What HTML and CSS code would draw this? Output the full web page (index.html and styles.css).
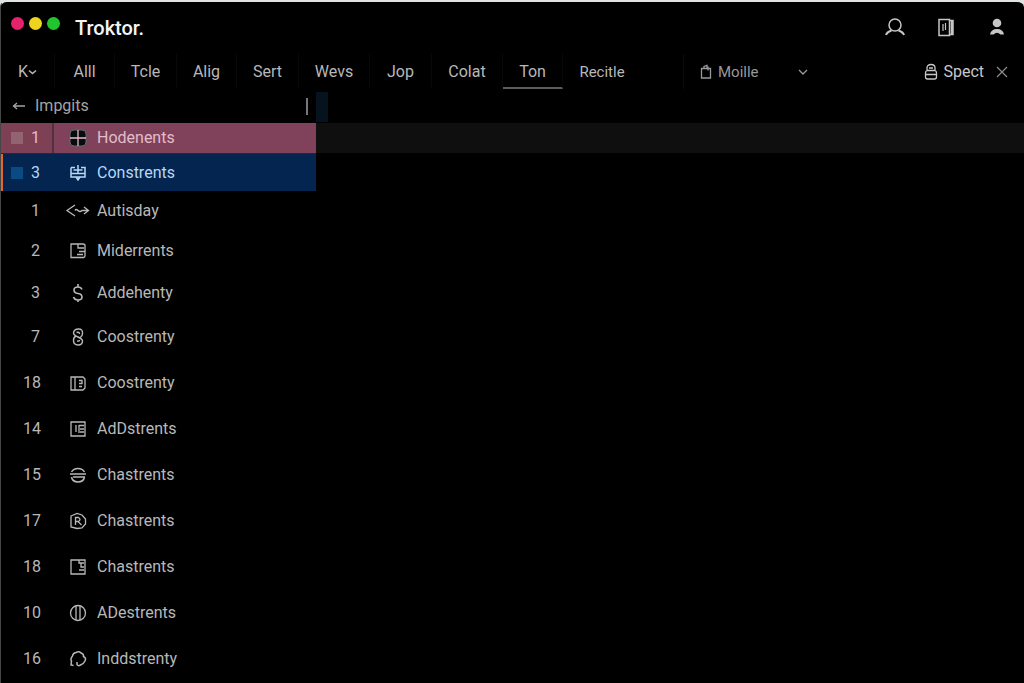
FILE: index.html
```html
<!DOCTYPE html>
<html lang="en">
<head>
<meta charset="utf-8">
<meta name="viewport" content="width=device-width, initial-scale=1">
<title>Troktor</title>
<link rel="stylesheet" href="styles.css">
</head>
<body>
<div class="window">
  <header class="titlebar">
    <div class="lights">
      <button class="light light-close" aria-label="Close"></button>
      <button class="light light-min" aria-label="Minimize"></button>
      <button class="light light-max" aria-label="Maximize"></button>
    </div>
    <h1 class="brand">Troktor.</h1>
    <div class="actions">
      <button class="icon-btn" aria-label="Search"><svg width="22" height="22" viewBox="0 0 22 22"><circle cx="11" cy="8" r="6"/><path d="M2 18Q3 15 7.500 13.500M20 18Q19 15 14.500 13.500" stroke-width="2"/></svg></button>
      <button class="icon-btn" aria-label="Panels"><svg width="22" height="22" viewBox="0 0 22 22"><path d="M4 2.500h10.500v16H4zM14.500 3.500h3.500v14h-3.500M16.500 4v13"/><path d="M8 7v7M10.500 6v7" stroke-width="1.200"/></svg></button>
      <button class="icon-btn" aria-label="Account"><svg width="22" height="22" viewBox="0 0 22 22"><circle cx="11" cy="6" r="4.300" class="fill"/><path d="M4 17.500Q5 12 11 12T18 17.500H14.500Q11 14 7.500 17.500Z" class="fill"/></svg></button>
    </div>
  </header>

  <nav class="toolbar">
    <button class="tab" aria-label="K menu">K<svg width="9" height="8" viewBox="0 0 9 8"><path d="M1 2.500l3.500 3L8 2.500" stroke-width="1.600"/></svg></button>
    <button class="tab">Alll</button>
    <button class="tab tab-m">Tcle</button>
    <button class="tab">Alig</button>
    <button class="tab tab-m">Sert</button>
    <button class="tab tab-l">Wevs</button>
    <button class="tab tab-m">Jop</button>
    <button class="tab tab-l">Colat</button>
    <button class="tab active">Ton</button>
    <button class="tab tab-xl">Recitle</button>
    <button class="mode"><svg width="12" height="16" viewBox="0 0 12 16"><path d="M1.500 4.500h9V14h-9zM4 4.500V2.500l3-1v3M8 2.500v4"/></svg><span>Moille</span><svg class="chev" width="12" height="8" viewBox="0 0 12 8"><path d="M2 2l4 4 4-4"/></svg></button>
    <div class="inspect">
      <button class="spect"><svg width="14" height="18" viewBox="0 0 14 18"><path d="M3 7V5q0-3.500 4-3.500T11 5v2M3 7.500Q1.500 8 1.500 10v4q0 2 2 2h7q2 0 2-2v-4q0-2-1.500-2.500zM5 5h4M2 11.500h10"/></svg><span>Spect</span></button>
      <button class="close" aria-label="Close panel"><svg width="12" height="14" viewBox="0 0 12 14"><path d="M1 2l10 10M11 2L1 12"/></svg></button>
    </div>
  </nav>

  <div class="body">
    <aside class="sidebar">
      <div class="side-head">
        <button class="back"><svg width="14" height="10" viewBox="0 0 14 10"><path d="M1 5h12M5 2L1.500 5 5 8"/></svg><span>Impgits</span></button>
        <span class="caret"></span>
      </div>
      <ul class="list">
        <li class="row row-rose"><span class="mark"></span><span class="num">1</span><span class="ico"><svg width="18" height="18" viewBox="0 0 18 18"><rect x="1" y="1" width="16" height="16" rx="4" fill="#090b0c" stroke="#547070" stroke-width="1"/><path d="M9 1v16M1 9h16"/></svg></span><span>Hodenents</span></li>
        <li class="row row-blue"><span class="mark"></span><span class="num">3</span><span class="ico"><svg width="18" height="18" viewBox="0 0 18 18"><path d="M2 3.500V13h4M2 3.500h4M12 3.500h4V13h-4M4.500 6h9M2 9.500h14M9 1v8.500M6 13h6M7 13l2 3 2-3" stroke-width="1.500"/></svg></span><span>Constrents</span></li>
        <li class="row row-s"><span class="mark"></span><span class="num">1</span><span class="ico"><svg width="24" height="14" viewBox="0 0 24 14"><path d="M9 1L1 6.500l8 5.500M9 6.500q1-2 3 0t4 0h6M18 3l4.500 3.500L18 10"/></svg></span><span>Autisday</span></li>
        <li class="row row-m"><span class="mark"></span><span class="num">2</span><span class="ico"><svg width="18" height="18" viewBox="0 0 18 18"><path d="M9 2H2v13.500h12.500q1.500 0 1.500-2v-10Q16 2 14 2H9v4h6M10 9.500h6M8 12.500h6"/></svg></span><span>Miderrents</span></li>
        <li class="row row-m"><span class="mark"></span><span class="num">3</span><span class="ico"><svg width="18" height="20" viewBox="0 0 18 20"><path d="M9 1v3M13 6.500Q12 4 9 4 5 4 5 7t4 3.500q4 .5 4 3.500t-4 3q-3.500 0-4.500-3M9 17v2" stroke-width="1.600"/></svg></span><span>Addehenty</span></li>
        <li class="row row-l"><span class="mark"></span><span class="num">7</span><span class="ico"><svg width="18" height="20" viewBox="0 0 18 20"><path d="M13.500 6.500Q14 2 9.500 2T4.500 6q0 2 4.500 4t4.500 4q0 4-4.500 4t-4.500-4.500Q4.500 10 7 9M13.500 6.500q0 2.500-2 3.500M7.500 5.500q3-1 3 1.500M8 14q2.500 .5 2.500-1" stroke-width="1.400"/></svg></span><span>Coostrenty</span></li>
        <li class="row row-xl"><span class="mark"></span><span class="num">18</span><span class="ico"><svg width="18" height="18" viewBox="0 0 18 18"><path d="M8 3H2v13h12l2-2V5l-2-2H6v13M10 6.500h3v3h-3M10 12.500h3"/></svg></span><span>Coostrenty</span></li>
        <li class="row row-xl"><span class="mark"></span><span class="num">14</span><span class="ico"><svg width="18" height="18" viewBox="0 0 18 18"><path d="M2 2h14v14H2zM7 5v7M10 5v8M10 5.500h5M11 9h4M11 12h4"/></svg></span><span>AdDstrents</span></li>
        <li class="row row-xl"><span class="mark"></span><span class="num">15</span><span class="ico"><svg width="18" height="18" viewBox="0 0 18 18"><path d="M2.500 6Q4.500 2.500 9 2.500T15.500 6M1 8h16M4 11h12M2.500 11q1 5 6.500 5t6.500-5" stroke-width="1.500"/></svg></span><span>Chastrents</span></li>
        <li class="row row-xl"><span class="mark"></span><span class="num">17</span><span class="ico"><svg width="18" height="18" viewBox="0 0 18 18"><path d="M2 4l6-2.500L13 3l3.500 4v5L13 16l-5 .5L2 15zM6.500 13V5.500h3q3 2 0 4h-3M9 9.500l3.500 3.500"/></svg></span><span>Chastrents</span></li>
        <li class="row row-xl"><span class="mark"></span><span class="num">18</span><span class="ico"><svg width="18" height="18" viewBox="0 0 18 18"><path d="M10 2H2v14h14V2h-6v3h5M12 5v4h3M10 12h5"/></svg></span><span>Chastrents</span></li>
        <li class="row row-xl"><span class="mark"></span><span class="num">10</span><span class="ico"><svg width="18" height="18" viewBox="0 0 18 18"><circle cx="9" cy="9" r="7.500"/><path d="M7 2v14M11 2v14"/></svg></span><span>ADestrents</span></li>
        <li class="row row-xl"><span class="mark"></span><span class="num">16</span><span class="ico"><svg width="18" height="18" viewBox="0 0 18 18"><path d="M4.500 15.500L2 15l.5-4Q1 9 3.500 6 4 3 7 2.500q3-1.500 5 .5 3 1 2.500 3.500Q17.500 8 16 11t-4.500 4q-2.500 1.500-3.500-.5V12" stroke-width="1.500"/></svg></span><span>Inddstrenty</span></li>
      </ul>
    </aside>
    <main class="stage">
      <div class="stage-head"></div>
      <div class="stage-band"></div>
    </main>
  </div>
</div>
</body>
</html>
```
FILE: styles.css
```css
* { box-sizing: border-box; }

body {
  margin: 0;
  background: #dfe4e2;
  color: #b8b8b8;
  font: 16px/20px Roboto, "Liberation Sans", sans-serif;
}

button {
  margin: 0;
  padding: 0;
  border: 0;
  background: none;
  color: inherit;
  font: inherit;
}

svg {
  display: block;
  flex: none;
  overflow: visible;
  fill: none;
  stroke: currentColor;
  stroke-width: 1.3;
}

.fill { fill: currentColor; stroke: none; }

.window {
  min-height: 100vh;
  overflow: hidden;
  border-top: 2px solid #dfe4e2;
  border-left: 1px solid #454747;
  border-radius: 7px 7px 0 0;
  background: #000;
}

.titlebar {
  display: flex;
  align-items: center;
  height: 52px;
  padding: 0 16px 0 10px;
}

.lights {
  display: flex;
  gap: 5px;
  margin-bottom: 10px;
}

.light {
  width: 13px;
  height: 13px;
  border-radius: 50%;
}

.light-close { background: #e5236c; }
.light-min { background: #efd41f; }
.light-max { background: #22c52e; }

.brand {
  margin: 0 0 0 15px;
  color: #f4f4f4;
  font-size: 20px;
  font-weight: 500;
  line-height: 24px;
}

.actions {
  display: flex;
  gap: 29px;
  margin-left: auto;
  color: #c6c6c6;
}

.icon-btn svg { stroke-width: 1.5; }

.toolbar {
  display: flex;
  height: 35px;
}

.tab {
  display: flex;
  align-items: center;
  justify-content: center;
  flex: none;
  width: 60px;
  padding-top: 2px;
  border-right: 1px solid #080808;
  border-bottom: 2px solid transparent;
}

.tab:first-child { width: 54px; }
.tab-m { width: 62px; }
.tab-l { width: 71px; }
.tab-xl {
  width: 78px;
  border-right: 0;
  font-size: 15px;
}
.tab.active { border-bottom-color: #5c5c5c; }

.mode {
  display: flex;
  align-items: center;
  gap: 6px;
  margin-left: 42px;
  padding: 0 16px;
  border-left: 1px solid #0b0b0b;
  color: #999;
  font-size: 15px;
}

.chev { margin-left: 32px; }

.inspect {
  display: flex;
  gap: 12px;
  margin-left: auto;
  padding-right: 16px;
}

.spect {
  display: flex;
  align-items: center;
  gap: 5px;
  color: #c8c8c8;
}

.close { color: #8a8a8a; }

.body {
  display: grid;
  grid-template-columns: 315px 1fr;
}

.side-head {
  display: flex;
  align-items: center;
  justify-content: space-between;
  height: 34px;
  padding: 0 8px 0 11px;
}

.back {
  display: flex;
  align-items: center;
  gap: 9px;
  color: #a4a4a4;
}

.caret {
  width: 2px;
  height: 17px;
  background: #777;
}

.list {
  margin: 0;
  padding: 0;
  list-style: none;
}

.row {
  display: grid;
  grid-template-columns: 12px 28px 27px 1fr;
  align-items: center;
  padding-left: 10px;
}

.row > :last-child { padding-left: 19px; }

.row-s { height: 39px; }
.row-m { height: 42px; }
.row-l { height: 46px; }
.row-xl { height: 46px; }

.row-rose {
  height: 31px;
  border-bottom: 1px solid #2c2437;
  background: linear-gradient(90deg, #7d4055 51px, #54303f 51px 53px, #80425a 53px);
  color: #e3bdca;
}

.row-blue {
  height: 37px;
  background: linear-gradient(90deg, #e5652e 2px, #03254f 2px);
  color: #b7d8f6;
}

.mark { height: 12px; }
.row-rose .mark { background: #926371; }
.row-blue .mark { background: #0b4b83; }

.num {
  padding-right: 11px;
  text-align: right;
}

.ico {
  display: flex;
  justify-content: center;
  width: 54px;
}

.stage-head {
  width: 12px;
  height: 34px;
  border-top: 3px solid #000;
  border-bottom: 1px solid #000;
  background: #06121e;
}

.stage-band {
  height: 30px;
  background: #0f0f0f;
}
```
